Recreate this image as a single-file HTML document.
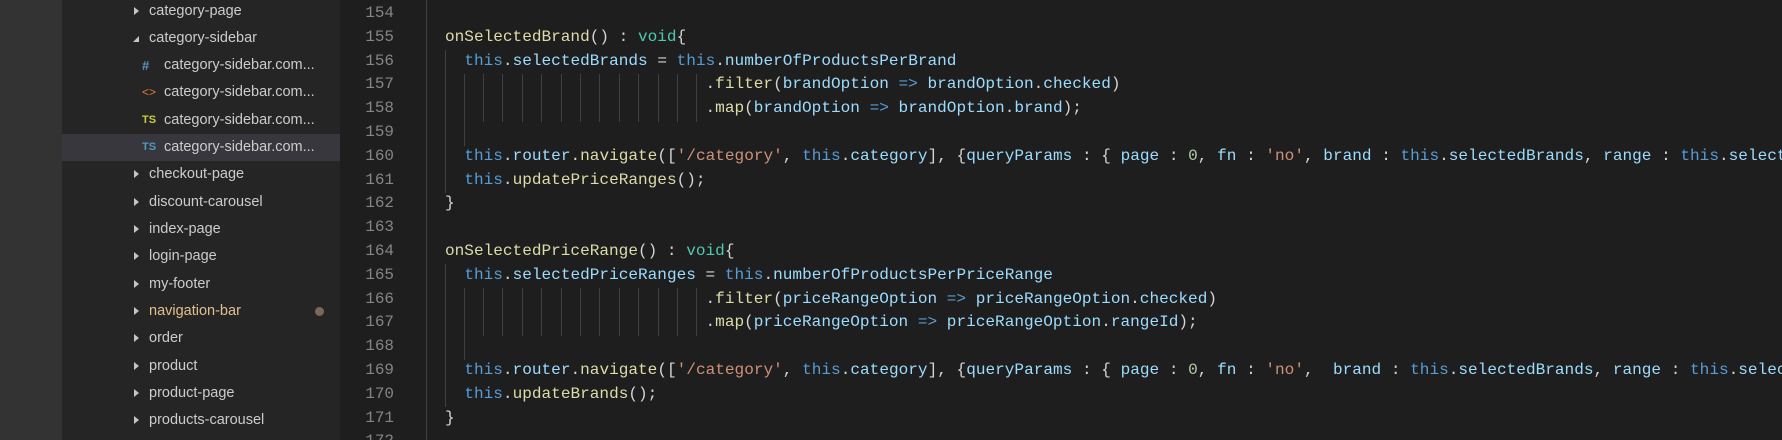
<!DOCTYPE html>
<html><head><meta charset="utf-8"><style>
*{margin:0;padding:0;box-sizing:border-box}
html,body{width:1782px;height:440px;overflow:hidden}
body{background:#1e1e1e;position:relative;font-family:"Liberation Sans",sans-serif}
#act{position:absolute;left:0;top:0;width:62px;height:440px;background:#333333}
#side{position:absolute;left:62px;top:0;width:278px;height:440px;background:#252526}
.row{position:absolute;left:62px;width:278px;height:27px;color:#cccccc;font-size:14.5px;line-height:27px}
.row.sel{background:#37373d}
.row .t{position:absolute;left:87px}
.row .f{position:absolute;left:102px}
.arr{position:absolute;left:72px;top:9px;width:0;height:0;border-top:4.5px solid transparent;border-bottom:4.5px solid transparent;border-left:5px solid #c5c5c5}
.arr.open{left:71px;top:11px;border:none;width:0;height:0;border-left:6px solid transparent;border-bottom:6px solid #c5c5c5}
.ic{position:absolute;left:80px;font-size:11px;font-weight:bold;font-family:"Liberation Sans",sans-serif}
.code{position:absolute;left:0;top:2px;width:1782px;height:440px;overflow:hidden;font-family:"Liberation Mono",monospace;font-size:16.08px;line-height:23.8px;white-space:pre;color:#d4d4d4}
.ln{position:absolute;left:340px;width:54px;text-align:right;color:#858585;font-family:"Liberation Mono",monospace;font-size:15.95px;line-height:23.8px;white-space:pre}
.src{position:absolute;left:445px}
.k{color:#569cd6}.ty{color:#4ec9b0}.fn{color:#dcdcaa}.p{color:#9cdcfe}.s{color:#ce9178}.n{color:#b5cea8}
.g{position:absolute;width:1px;background:#404040}
</style></head><body>
<div id="act"></div><div id="side"></div>

<div class="row" style="top:-2px"><span class="arr"></span><span class="t">category-page</span></div>
<div class="row" style="top:25px"><span class="arr open"></span><span class="t">category-sidebar</span></div>
<div class="row" style="top:52px"><span class="ic" style="color:#519aba;font-size:13px">#</span><span class="f">category-sidebar.com...</span></div>
<div class="row" style="top:79px"><span class="ic" style="color:#e37933;font-size:12px;font-weight:normal">&lt;&gt;</span><span class="f">category-sidebar.com...</span></div>
<div class="row" style="top:107px"><span class="ic" style="color:#cbcb41">TS</span><span class="f">category-sidebar.com...</span></div>
<div class="row sel" style="top:134px"><span class="ic" style="color:#519aba">TS</span><span class="f">category-sidebar.com...</span></div>
<div class="row" style="top:161px"><span class="arr"></span><span class="t">checkout-page</span></div>
<div class="row" style="top:189px"><span class="arr"></span><span class="t">discount-carousel</span></div>
<div class="row" style="top:216px"><span class="arr"></span><span class="t">index-page</span></div>
<div class="row" style="top:243px"><span class="arr"></span><span class="t">login-page</span></div>
<div class="row" style="top:271px"><span class="arr"></span><span class="t">my-footer</span></div>
<div class="row" style="top:298px"><span class="arr"></span><span class="t" style="color:#e2c08d">navigation-bar</span><span style="position:absolute;left:253px;top:9px;width:9px;height:9px;border-radius:50%;background:#7a6a55"></span></div>
<div class="row" style="top:325px"><span class="arr"></span><span class="t">order</span></div>
<div class="row" style="top:353px"><span class="arr"></span><span class="t">product</span></div>
<div class="row" style="top:380px"><span class="arr"></span><span class="t">product-page</span></div>
<div class="row" style="top:407px"><span class="arr"></span><span class="t">products-carousel</span></div>

<div class="g" style="left:426px;top:0;height:440px"></div>
<div class="g" style="left:445px;top:50px;height:143px"></div>
<div class="g" style="left:445px;top:264px;height:143px"></div>

<div style="position:absolute;left:0;top:0">
<div class="g" style="left:464px;top:74px;height:72px"></div>
<div class="g" style="left:483px;top:74px;height:48px"></div><div class="g" style="left:502px;top:74px;height:48px"></div><div class="g" style="left:522px;top:74px;height:48px"></div><div class="g" style="left:541px;top:74px;height:48px"></div><div class="g" style="left:561px;top:74px;height:48px"></div><div class="g" style="left:580px;top:74px;height:48px"></div><div class="g" style="left:599px;top:74px;height:48px"></div><div class="g" style="left:619px;top:74px;height:48px"></div><div class="g" style="left:638px;top:74px;height:48px"></div><div class="g" style="left:658px;top:74px;height:48px"></div><div class="g" style="left:677px;top:74px;height:48px"></div><div class="g" style="left:696px;top:74px;height:48px"></div>
<div class="g" style="left:464px;top:288px;height:72px"></div>
<div class="g" style="left:483px;top:288px;height:48px"></div><div class="g" style="left:502px;top:288px;height:48px"></div><div class="g" style="left:522px;top:288px;height:48px"></div><div class="g" style="left:541px;top:288px;height:48px"></div><div class="g" style="left:561px;top:288px;height:48px"></div><div class="g" style="left:580px;top:288px;height:48px"></div><div class="g" style="left:599px;top:288px;height:48px"></div><div class="g" style="left:619px;top:288px;height:48px"></div><div class="g" style="left:638px;top:288px;height:48px"></div><div class="g" style="left:658px;top:288px;height:48px"></div><div class="g" style="left:677px;top:288px;height:48px"></div><div class="g" style="left:696px;top:288px;height:48px"></div>
</div>

<div class="ln" style="top:2px">154
155
156
157
158
159
160
161
162
163
164
165
166
167
168
169
170
171
172</div>

<div class="code"><div class="src">
<span class="fn">onSelectedBrand</span>() : <span class="ty">void</span>{
  <span class="k">this</span>.<span class="p">selectedBrands</span> = <span class="k">this</span>.<span class="p">numberOfProductsPerBrand</span>
                           .<span class="fn">filter</span>(<span class="p">brandOption</span> <span class="k">=&gt;</span> <span class="p">brandOption</span>.<span class="p">checked</span>)
                           .<span class="fn">map</span>(<span class="p">brandOption</span> <span class="k">=&gt;</span> <span class="p">brandOption</span>.<span class="p">brand</span>);

  <span class="k">this</span>.<span class="p">router</span>.<span class="fn">navigate</span>([<span class="s">'/category'</span>, <span class="k">this</span>.<span class="p">category</span>], {<span class="p">queryParams</span> : { <span class="p">page</span> : <span class="n">0</span>, <span class="p">fn</span> : <span class="s">'no'</span>, <span class="p">brand</span> : <span class="k">this</span>.<span class="p">selectedBrands</span>, <span class="p">range</span> : <span class="k">this</span>.<span class="p">select</span>
  <span class="k">this</span>.<span class="fn">updatePriceRanges</span>();
}

<span class="fn">onSelectedPriceRange</span>() : <span class="ty">void</span>{
  <span class="k">this</span>.<span class="p">selectedPriceRanges</span> = <span class="k">this</span>.<span class="p">numberOfProductsPerPriceRange</span>
                           .<span class="fn">filter</span>(<span class="p">priceRangeOption</span> <span class="k">=&gt;</span> <span class="p">priceRangeOption</span>.<span class="p">checked</span>)
                           .<span class="fn">map</span>(<span class="p">priceRangeOption</span> <span class="k">=&gt;</span> <span class="p">priceRangeOption</span>.<span class="p">rangeId</span>);

  <span class="k">this</span>.<span class="p">router</span>.<span class="fn">navigate</span>([<span class="s">'/category'</span>, <span class="k">this</span>.<span class="p">category</span>], {<span class="p">queryParams</span> : { <span class="p">page</span> : <span class="n">0</span>, <span class="p">fn</span> : <span class="s">'no'</span>,  <span class="p">brand</span> : <span class="k">this</span>.<span class="p">selectedBrands</span>, <span class="p">range</span> : <span class="k">this</span>.<span class="p">selec</span>
  <span class="k">this</span>.<span class="fn">updateBrands</span>();
}
</div></div>
</body></html>
